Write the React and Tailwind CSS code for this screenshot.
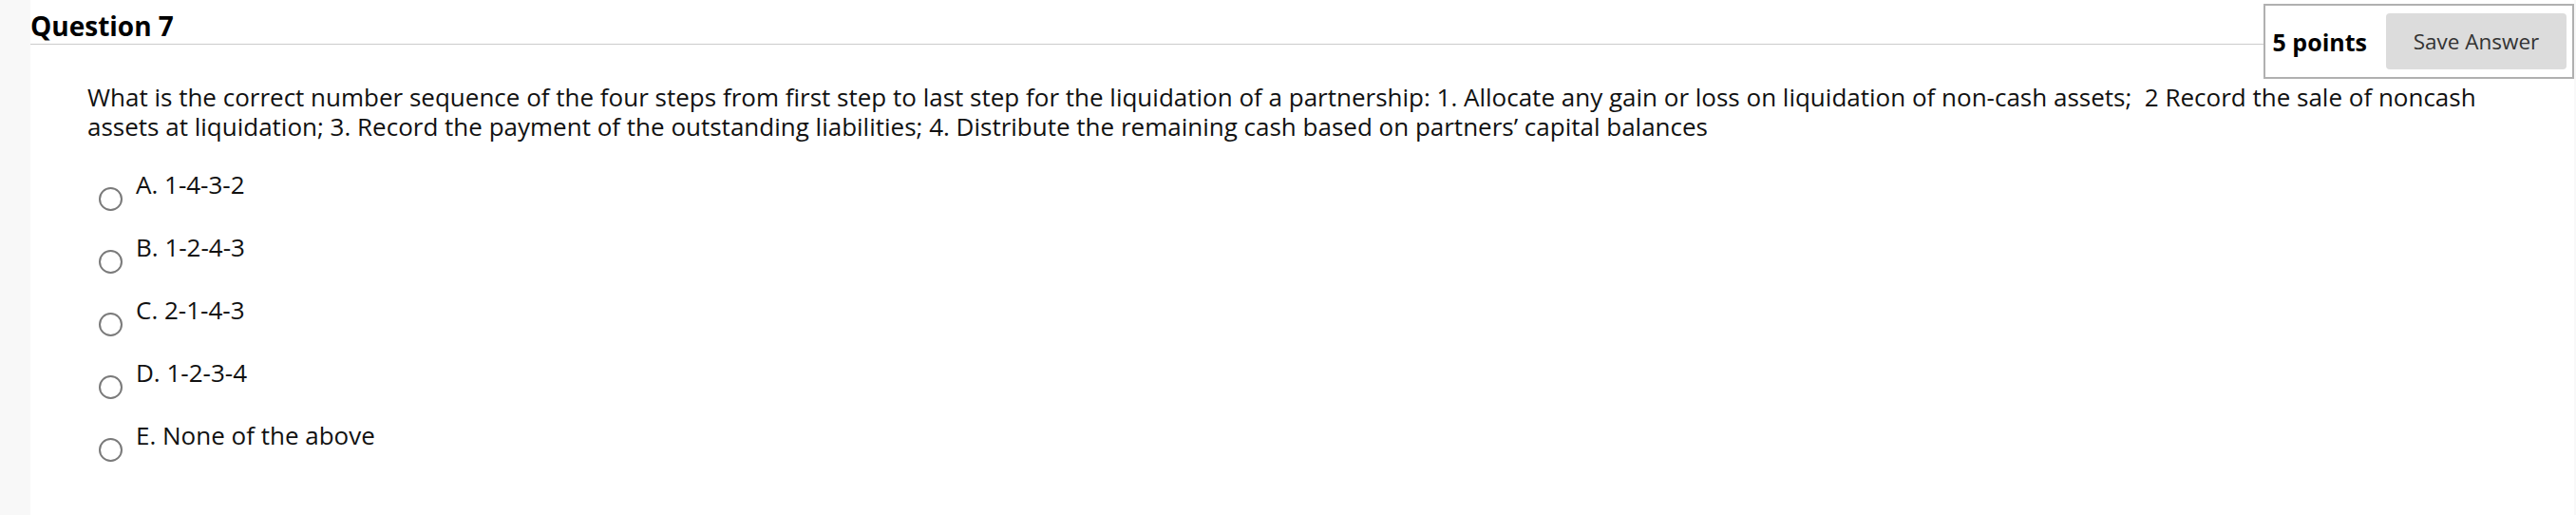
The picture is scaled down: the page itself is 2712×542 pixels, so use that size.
import React from "react";

const options = [
  "A. 1-4-3-2",
  "B. 1-2-4-3",
  "C. 2-1-4-3",
  "D. 1-2-3-4",
  "E. None of the above",
];

export default function App() {
  return (
    <div
      className="flex h-[542px] w-full bg-[#f8f8f8]"
      style={{ fontFamily: '"Open Sans", "Liberation Sans", sans-serif' }}
    >
      <div className="ml-[32px] mr-[2px] flex-1 bg-white text-[#111]">
        <div className="flex items-start">
          <div className="h-[47px] flex-1 border-b border-[#cccccc] pt-[7px]">
            <h1 className="text-[28px] font-bold leading-[40px] text-black">Question 7</h1>
          </div>
          <div className="mt-[4px] flex items-center gap-[20px] border-2 border-[#b0b0b0] py-[8px] pl-[8px] pr-[6px]">
            <span className="text-[25px] font-bold leading-[32px] text-black">5 points</span>
            <button className="h-[59px] w-[190px] rounded-[4px] bg-[#dcdcdc] text-[22.5px] text-[#333]">
              Save Answer
            </button>
          </div>
        </div>
        <div className="pl-[60px] pr-[58px] pt-[4px]">
          <p className="text-[26px] leading-[31px]">
            What is the correct number sequence of the four steps from first step to last step for the liquidation of a partnership: 1. Allocate any gain or loss on liquidation of non-cash assets;{"\u00a0"} 2 Record the sale of noncash assets at liquidation; 3. Record the payment of the outstanding liabilities; 4. Distribute the remaining cash based on partners’ capital balances
          </p>
          <ul className="mt-[28px] flex flex-col gap-[21px] pl-[12px]">
            {options.map((o) => (
              <li key={o} className="flex items-start gap-[14px]">
                <span className="mt-[20px] block h-[25px] w-[25px] shrink-0 rounded-full border-2 border-[#7a7a7a] bg-white" />
                <span className="text-[26px] leading-[34px]">{o}</span>
              </li>
            ))}
          </ul>
        </div>
      </div>
    </div>
  );
}
